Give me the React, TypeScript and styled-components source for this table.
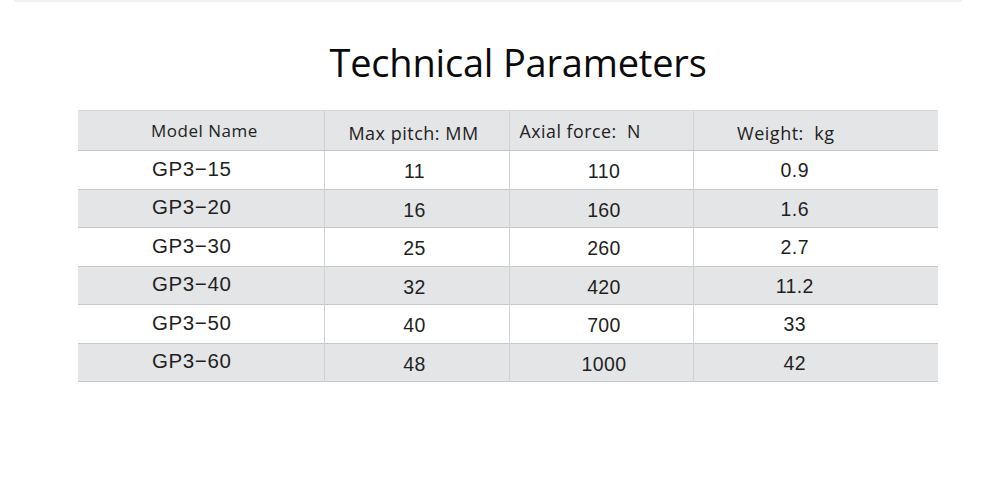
import React from "react";
import styled, { createGlobalStyle } from "styled-components";

const rows = [
  ["GP3−15", "11", "110", "0.9"],
  ["GP3−20", "16", "160", "1.6"],
  ["GP3−30", "25", "260", "2.7"],
  ["GP3−40", "32", "420", "11.2"],
  ["GP3−50", "40", "700", "33"],
  ["GP3−60", "48", "1000", "42"],
];

export default function App() {
  return (
    <Page>
      <GlobalStyle />
      <TopRule />
      <Title>Technical Parameters</Title>
      <Table>
        <colgroup>
          <col style={{ width: 246 }} />
          <col style={{ width: 185 }} />
          <col style={{ width: 184 }} />
          <col style={{ width: 245 }} />
        </colgroup>
        <thead>
          <tr>
            <HeadCell $align="left" $pad="0 0 0 73px" $size={17}>
              Model Name
            </HeadCell>
            <HeadCell $align="center" $pad="4px 6px 0 0" $size={18}>
              Max pitch: MM
            </HeadCell>
            <HeadCell $align="left" $pad="0 0 0 10px" $size={17.8}>
              {"Axial force:  N"}
            </HeadCell>
            <HeadCell $align="center" $pad="4px 60px 0 0" $size={18}>
              {"Weight:  kg"}
            </HeadCell>
          </tr>
        </thead>
        <tbody>
          {rows.map((r, i) => (
            <Row key={r[0]} $shaded={i % 2 === 1}>
              <NameCell>{r[0]}</NameCell>
              <ValueCell $shift="4px 4px 0 0">{r[1]}</ValueCell>
              <ValueCell $shift="4px 0 0 6px">{r[2]}</ValueCell>
              <ValueCell $shift="2px 42px 0 0">{r[3]}</ValueCell>
            </Row>
          ))}
        </tbody>
      </Table>
    </Page>
  );
}

const GlobalStyle = createGlobalStyle`
  body {
    margin: 0;
    background: #ffffff;
  }
`;

const Page = styled.div`
  width: 1000px;
  height: 479px;
  background: #ffffff;
  color: #1d1d1d;
`;

const TopRule = styled.div`
  margin: 0 38px 0 14px;
  height: 2px;
  background: #f1f1f1;
`;

const Title = styled.h1`
  margin: 0;
  padding: 35px 0 0 36px;
  height: 108px;
  box-sizing: border-box;
  text-align: center;
  font-family: "Open Sans", sans-serif;
  font-weight: 400;
  font-size: 38px;
  line-height: 50px;
  color: #0a0a0a;
  letter-spacing: -0.2px;
`;

const Table = styled.table`
  margin-left: 78px;
  width: 860px;
  table-layout: fixed;
  border-collapse: collapse;
`;

const HeadCell = styled.th<{ $align: string; $pad: string; $size: number }>`
  height: 40px;
  padding: ${(p) => p.$pad};
  box-sizing: border-box;
  background: #e4e5e7;
  border-top: 1px solid #d6d7d9;
  border-left: 1px solid #cfd0d2;
  border-bottom: 1px solid #c4c5c7;
  text-align: ${(p) => p.$align};
  font-family: "Open Sans", sans-serif;
  font-weight: 400;
  font-size: ${(p) => p.$size}px;
  letter-spacing: 0.5px;
  color: #222;
  white-space: pre;

  &:first-child {
    border-left: none;
  }
`;

const Row = styled.tr<{ $shaded: boolean }>`
  height: 38.5px;
  background: ${(p) => (p.$shaded ? "#e4e5e7" : "#ffffff")};
  border-bottom: 1px solid #c6c7c9;
`;

const NameCell = styled.td`
  padding: 0 0 2px 74px;
  font-family: "Liberation Sans", Arial, sans-serif;
  font-size: 20.5px;
  letter-spacing: 0.6px;
  color: #1f1f1f;
`;

const ValueCell = styled.td<{ $shift: string }>`
  padding: ${(p) => p.$shift};
  border-left: 1px solid #d0d1d3;
  text-align: center;
  font-family: "Liberation Sans", Arial, sans-serif;
  font-size: 19.5px;
  letter-spacing: 0.4px;
  color: #1f1f1f;
`;
